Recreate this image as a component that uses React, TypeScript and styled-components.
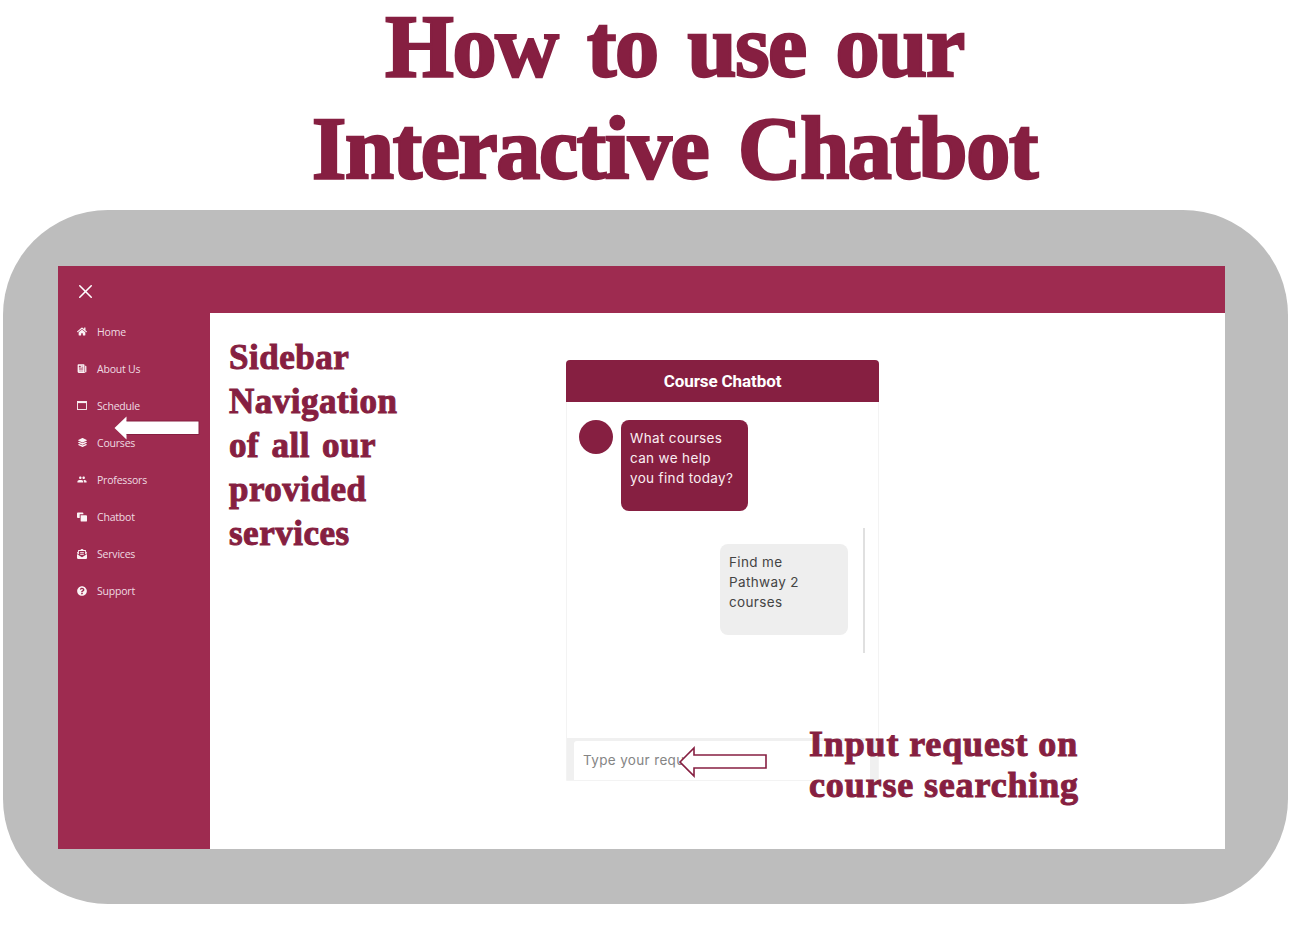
import React from 'react'
import styled, { createGlobalStyle } from 'styled-components'
import { X } from 'lucide-react'
import { FaHome, FaLayerGroup, FaQuestionCircle, FaEnvelopeOpenText } from 'react-icons/fa'
import { MdPeople } from 'react-icons/md'
import { IoNewspaper } from 'react-icons/io5'

const GlobalStyle = createGlobalStyle`
  html, body {
    margin: 0;
    padding: 0;
    background: white;
  }
`

const CalendarIcon = () => (
  <svg width="10" height="9" viewBox="0 0 10 9">
    <rect x="0.5" y="0.5" width="9" height="8" fill="none" stroke="currentColor" strokeWidth="0.9" />
    <rect x="0.5" y="0.5" width="9" height="1.6" fill="currentColor" />
  </svg>
)

const ChatSquaresIcon = () => (
  <svg width="11" height="10" viewBox="0 0 11 10">
    <path d="M0 1 Q0 0 1 0 H6 Q7 0 7 1 V2 H3 V6 H1 Q0 6 0 5 Z" fill="currentColor" />
    <path d="M4 3 H10 Q11 3 11 4 V9 Q11 10 10 10 H5 Q4 10 4 9 Z" fill="currentColor" />
  </svg>
)

const navItems = [
  { label: 'Home', icon: <FaHome size={11} /> },
  { label: 'About Us', icon: <IoNewspaper size={11} /> },
  { label: 'Schedule', icon: <CalendarIcon /> },
  { label: 'Courses', icon: <FaLayerGroup size={9} /> },
  { label: 'Professors', icon: <MdPeople size={13} /> },
  { label: 'Chatbot', icon: <ChatSquaresIcon /> },
  { label: 'Services', icon: <FaEnvelopeOpenText size={12} /> },
  { label: 'Support', icon: <FaQuestionCircle size={10} /> },
]

export default function App() {
  return (
    <Page>
      <GlobalStyle />
      <Title>
        <TitleLine $height={94}>How to use our</TitleLine>
        <TitleLine $height={110}>Interactive Chatbot</TitleLine>
      </Title>
      <Frame>
        <Screen>
          <TopBar>
            <X size={23} color="white" strokeWidth={1.6} />
          </TopBar>
          <Body>
            <Sidebar>
              {navItems.map((item) => (
                <NavItem key={item.label}>
                  <NavIcon>{item.icon}</NavIcon>
                  {item.label}
                </NavItem>
              ))}
            </Sidebar>
            <Main>
              <SideNote>
                Sidebar
                <br />
                Navigation
                <br />
                of all our
                <br />
                provided
                <br />
                services
              </SideNote>
              <ChatCard>
                <ChatHeader>Course Chatbot</ChatHeader>
                <ChatBody>
                  <BotRow>
                    <Avatar />
                    <Bubble $bot>What courses can we help you find today?</Bubble>
                  </BotRow>
                  <UserRow>
                    <Bubble>Find me Pathway 2 courses</Bubble>
                    <ScrollLine />
                  </UserRow>
                </ChatBody>
                <InputBar>
                  <ChatInput placeholder="Type your request" />
                </InputBar>
              </ChatCard>
            </Main>
          </Body>
          <SidebarArrow width="86" height="24" viewBox="0 0 86 24">
            <path d="M0.5 12 L12.5 0.5 V5 H85 V18.5 H12.5 V23.5 Z" fill="white" />
            <path d="M12.5 5 H85 V18.5 H12.5" fill="none" stroke="#861f41" strokeWidth="1" />
          </SidebarArrow>
          <InputArrow width="90" height="32" viewBox="0 0 90 32">
            <path d="M1 16 L15 2 V9 H87 V22 H15 V30 Z" fill="white" stroke="#861f41" strokeWidth="1.6" />
          </InputArrow>
          <InputNote>
            Input request on
            <br />
            course searching
          </InputNote>
        </Screen>
      </Frame>
    </Page>
  )
}

const Page = styled.div`
  width: 1297px;
  height: 934px;
  overflow: hidden;
  background: white;
`

const Title = styled.h1`
  margin: 0;
  height: 210px;
  box-sizing: border-box;
  padding: 0 0 0 52px;
  text-align: center;
  font-family: 'Liberation Serif', serif;
  font-size: 88px;
  font-weight: 700;
  color: #861f41;
  -webkit-text-stroke: 2.5px #861f41;
  letter-spacing: -1.3px;
  word-spacing: 9px;
`

const TitleLine = styled.div<{ $height: number }>`
  line-height: ${({ $height }) => $height}px;
`

const Frame = styled.div`
  margin-left: 3px;
  width: 1285px;
  height: 694px;
  box-sizing: border-box;
  padding: 56px 63px 55px 55px;
  background: #bdbdbd;
  border-radius: 105px;
`

const Screen = styled.div`
  position: relative;
  height: 583px;
  display: flex;
  flex-direction: column;
  background: white;
`

const TopBar = styled.div`
  height: 47px;
  flex-shrink: 0;
  display: flex;
  align-items: center;
  padding-left: 16px;
  padding-top: 4px;
  box-sizing: border-box;
  background: #9e2b50;
`

const Body = styled.div`
  flex: 1;
  display: flex;
  min-height: 0;
`

const Sidebar = styled.nav`
  width: 152px;
  flex-shrink: 0;
  background: #9e2b50;
`

const NavItem = styled.div`
  height: 37px;
  display: flex;
  align-items: center;
  font-family: 'Open Sans', sans-serif;
  font-size: 10.5px;
  letter-spacing: -0.2px;
  color: #efdbe2;
`

const NavIcon = styled.span`
  width: 39px;
  box-sizing: border-box;
  padding-left: 19px;
  padding-right: 10px;
  display: flex;
  justify-content: center;
  color: #fbf3f5;
`

const Main = styled.main`
  flex: 1;
  display: flex;
  align-items: flex-start;
  min-width: 0;
`

const SideNote = styled.div`
  width: 337px;
  flex-shrink: 0;
  margin: 23px 0 0 19px;
  font-family: 'Liberation Serif', serif;
  font-size: 35px;
  line-height: 44px;
  font-weight: 700;
  color: #861f41;
  -webkit-text-stroke: 1px #861f41;
  letter-spacing: 0.5px;
  word-spacing: 3px;
`

const ChatCard = styled.section`
  width: 313px;
  height: 421px;
  margin-top: 47px;
  display: flex;
  flex-direction: column;
  box-sizing: border-box;
  border: 1px solid #f3f3f3;
  border-radius: 4px 4px 0 0;
`

const ChatHeader = styled.header`
  height: 42px;
  margin: -1px -1px 0;
  flex-shrink: 0;
  display: flex;
  align-items: center;
  justify-content: center;
  border-radius: 4px 4px 0 0;
  background: #861f41;
  color: white;
  font-family: 'Roboto', sans-serif;
  font-size: 17px;
  font-weight: 700;
  letter-spacing: -0.1px;
`

const ChatBody = styled.div`
  flex: 1;
  padding: 18px 0 0 12px;
  min-height: 0;
`

const BotRow = styled.div`
  display: flex;
  align-items: flex-start;
  gap: 8px;
`

const UserRow = styled.div`
  position: relative;
  margin-top: 33px;
  padding-right: 30px;
  display: flex;
  justify-content: flex-end;
`

const Avatar = styled.div`
  width: 34px;
  height: 34px;
  border-radius: 50%;
  background: #861f41;
`

const Bubble = styled.div<{ $bot?: boolean }>`
  width: ${({ $bot }) => ($bot ? '127px' : '128px')};
  height: 91px;
  box-sizing: border-box;
  padding: 8px 12px 8px 9px;
  border-radius: 8px;
  background: ${({ $bot }) => ($bot ? '#861f41' : '#eeeeee')};
  color: ${({ $bot }) => ($bot ? '#fbeef2' : '#444444')};
  font-family: 'Inter', sans-serif;
  font-size: 13.5px;
  line-height: 20px;
  letter-spacing: 0.35px;
`

const ScrollLine = styled.div`
  position: absolute;
  right: 13px;
  top: -16px;
  width: 2px;
  height: 125px;
  background: #e0e0e0;
`

const InputBar = styled.div`
  height: 42px;
  flex-shrink: 0;
  box-sizing: border-box;
  padding: 3px 8px 0 7px;
  background: #f0f0f0;
`

const ChatInput = styled.input`
  width: 100%;
  height: 100%;
  box-sizing: border-box;
  padding: 0 10px 2px 9px;
  border: none;
  outline: none;
  border-radius: 3px 3px 0 0;
  background: white;
  font-family: 'Inter', sans-serif;
  font-size: 13.5px;
  letter-spacing: 0.35px;
  &::placeholder {
    color: #858585;
  }
`

const SidebarArrow = styled.svg`
  position: absolute;
  left: 56px;
  top: 150px;
`

const InputArrow = styled.svg`
  position: absolute;
  left: 621px;
  top: 480px;
`

const InputNote = styled.div`
  position: absolute;
  left: 751px;
  top: 458px;
  font-family: 'Liberation Serif', serif;
  font-size: 36px;
  line-height: 41px;
  font-weight: 700;
  color: #861f41;
  -webkit-text-stroke: 1px #861f41;
  letter-spacing: 0.85px;
  white-space: nowrap;
`
